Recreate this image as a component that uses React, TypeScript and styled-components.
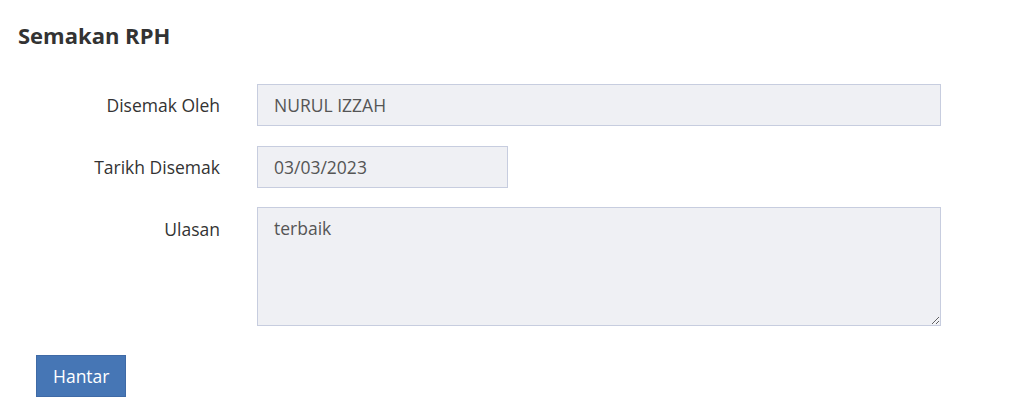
import styled, { createGlobalStyle } from "styled-components";

const GlobalStyle = createGlobalStyle`
  html, body {
    margin: 0;
    padding: 0;
    background: #ffffff;
    font-family: "Open Sans", "Liberation Sans", sans-serif;
  }
`;

const Page = styled.div`
  padding: 21px 0 0 18px;
  width: 1006px;
  height: 397px;
  color: #333333;
`;

const Title = styled.h3`
  margin: 0 0 35px;
  font-size: 22px;
  font-weight: 700;
  line-height: 28px;
  color: #333333;
`;

const Form = styled.form`
  display: flex;
  flex-direction: column;
  gap: 20px;
`;

const Row = styled.div<{ $top?: boolean }>`
  display: flex;
  align-items: ${(p) => (p.$top ? "flex-start" : "center")};
  margin-top: ${(p) => (p.$top ? "-1px" : "0")};
`;

const Label = styled.label<{ $top?: boolean }>`
  width: 202px;
  padding-right: 37px;
  padding-top: ${(p) => (p.$top ? "10px" : "0")};
  text-align: right;
  font-size: 17.5px;
  line-height: 24px;
  color: #333333;
  box-sizing: content-box;
`;

const fieldBase = `
  box-sizing: border-box;
  border: 1px solid #c7cddf;
  background: #eff0f4;
  color: #555555;
  font-family: "Open Sans", "Liberation Sans", sans-serif;
  font-size: 17.5px;
  padding: 0 16px;
  border-radius: 0;
  outline: none;
`;

const Input = styled.input<{ $w: number }>`
  ${fieldBase}
  width: ${(p) => p.$w}px;
  height: 42px;
`;

const TextArea = styled.textarea`
  ${fieldBase}
  width: 684px;
  height: 119px;
  padding-top: 8px;
  line-height: 24px;
  resize: vertical;
  display: block;
`;

const Actions = styled.div`
  padding: 29px 0 0 18px;
`;

const Button = styled.button`
  height: 42px;
  padding: 0 16px;
  border: 1px solid #3f6aa6;
  background: #4676b5;
  color: #ffffff;
  font-family: "Open Sans", "Liberation Sans", sans-serif;
  font-size: 17.5px;
  border-radius: 0;
  cursor: pointer;
`;

export default function App() {
  return (
    <>
      <GlobalStyle />
      <Page>
        <Title>Semakan RPH</Title>
        <Form onSubmit={(e) => e.preventDefault()}>
          <Row>
            <Label>Disemak Oleh</Label>
            <Input $w={684} readOnly value="NURUL IZZAH" />
          </Row>
          <Row>
            <Label>Tarikh Disemak</Label>
            <Input $w={251} readOnly value="03/03/2023" />
          </Row>
          <Row $top>
            <Label $top>Ulasan</Label>
            <TextArea readOnly value="terbaik" />
          </Row>
        </Form>
        <Actions>
          <Button type="button">Hantar</Button>
        </Actions>
      </Page>
    </>
  );
}
